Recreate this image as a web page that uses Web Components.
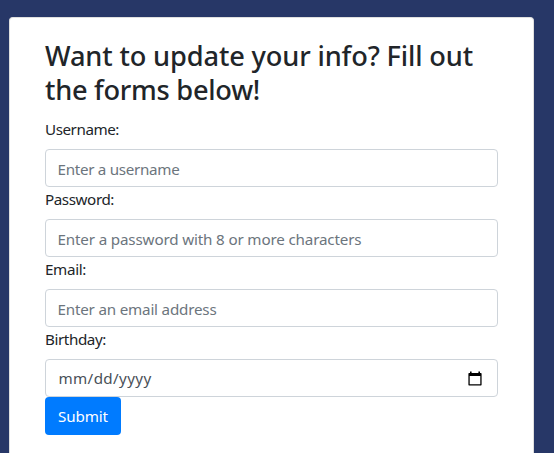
<!DOCTYPE html>
<html lang="en">
<head>
<meta charset="utf-8">
<title>Update your info</title>
<style>
html,body{margin:0;height:100%}
body{display:flow-root;background:#273767;overflow:hidden;font-family:"Noto Sans","Open Sans",sans-serif;font-size:15.2px;line-height:24px;color:#212529}
</style>
</head>
<body>
<info-card>
  <card-title><fit-text width="428">Want to update your info? Fill out</fit-text><fit-text width="215">the forms below!</fit-text></card-title>
  <form-field><fit-text slot="label" width="74">Username:</fit-text><fit-text width="122">Enter a username</fit-text></form-field>
  <form-field><fit-text slot="label" width="69">Password:</fit-text><fit-text width="304">Enter a password with 8 or more characters</fit-text></form-field>
  <form-field><fit-text slot="label" width="41">Email:</fit-text><fit-text width="159">Enter an email address</fit-text></form-field>
  <form-field class="date" style="--value:#495057"><fit-text slot="label" width="61">Birthday:</fit-text><fit-text width="93">mm/dd/yyyy</fit-text><calendar-icon slot="icon"></calendar-icon></form-field>
  <submit-button><fit-text width="50">Submit</fit-text></submit-button>
</info-card>
<script>
function define(name, html, setup) {
  const tpl = document.createElement('template');
  tpl.innerHTML = html;
  customElements.define(name, class extends HTMLElement {
    constructor() {
      super();
      this.attachShadow({mode: 'open'}).append(tpl.content.cloneNode(true));
    }
    connectedCallback() { if (setup) setup(this); }
  });
}
define('info-card', `<style>
:host{display:flow-root;box-sizing:border-box;width:525px;height:436px;margin:17px 0 0 9px;padding:21px 35px 0;background:#fff;border:1px solid #dfdfdf;border-bottom:0;border-radius:4px 4px 0 0}
</style><slot></slot>`);
define('card-title', `<style>
:host{display:block;font-size:27.2px;font-weight:500;line-height:34px;margin-bottom:10.2px}
h3{margin:0;font:inherit;display:flex;flex-direction:column;align-items:flex-start}
</style><h3><slot></slot></h3>`);
define('form-field', `<style>
:host{display:block}
.label{display:block;height:24px;margin-bottom:8px}
.control{display:flex;align-items:center;justify-content:space-between;box-sizing:border-box;height:38px;padding:2px 15px 0 11.5px;border:1px solid #ced4da;border-radius:4px;color:var(--value,#6c757d)}
:host(.date) .control{padding-top:0;padding-left:12.500px}
</style><div class="label"><slot name="label"></slot></div><div class="control"><slot></slot><slot name="icon"></slot></div>`);
define('submit-button', `<style>
:host{display:block}
button{display:flex;align-items:center;justify-content:center;box-sizing:border-box;width:76px;height:38px;padding:0;border:0;border-radius:4px;background:#007bff;color:#fff;font:inherit}
</style><button type="button"><slot></slot></button>`);
define('calendar-icon', `<style>:host{display:block;width:14px;height:15px}svg{display:block}</style>
<svg width="14" height="15" viewBox="0 0 14 15"><path fill="#000" fill-rule="evenodd" d="M2 .6h1.600V2h6.800V.6H12V2h.6c.7 0 1 .4 1 1v10.400c0 .7-.3 1.100-1 1.100H1.400c-.7 0-1-.4-1-1.100V3c0-.6.3-1 1-1H2ZM1.700 5v8.300h10.600V5Z"/></svg>`);
/* Spreads a line of text over a given width by letter spacing. */
define('fit-text', `<style>:host{display:inline-block;white-space:nowrap}</style><slot></slot>`, el => {
  const target = +el.getAttribute('width');
  const n = el.textContent.length;
  const apply = () => {
    el.style.letterSpacing = '0px';
    const w = el.getBoundingClientRect().width;
    el.style.letterSpacing = ((target - w) / n).toFixed(3) + 'px';
  };
  requestAnimationFrame(apply);
  apply();
});
</script>
</body>
</html>
